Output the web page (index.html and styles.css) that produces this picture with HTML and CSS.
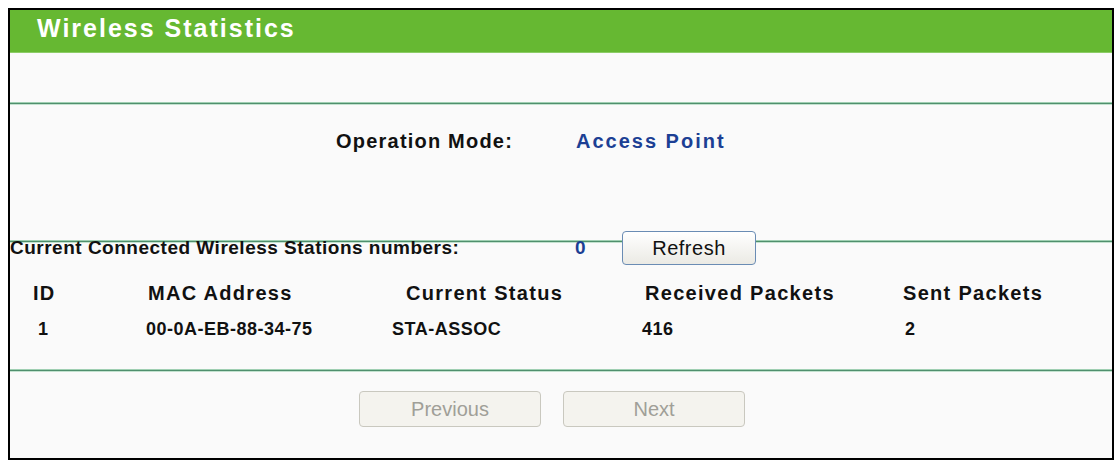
FILE: index.html
```html
<!DOCTYPE html>
<html lang="en">
<head>
    <meta charset="UTF-8">
    <title>Wireless Statistics</title>
    <link rel="stylesheet" href="styles.css">
</head>
<body>
    <div class="panel">
        <div class="title">Wireless Statistics</div>
        <div class="blank"></div>
        <div class="rule"></div>

        <div class="mode">
            <div class="mode-label">Operation Mode:</div>
            <div class="mode-value">Access Point</div>
        </div>
        <div class="rule"></div>

        <div class="stations">
            <div class="count-row">
                <span class="count-label">Current Connected Wireless Stations numbers:</span>
                <span class="count-value">0</span>
                <button class="btn refresh">Refresh</button>
            </div>
            <div class="grid head">
                <span>ID</span>
                <span>MAC Address</span>
                <span>Current Status</span>
                <span>Received Packets</span>
                <span>Sent Packets</span>
            </div>
            <div class="grid data">
                <span>1</span>
                <span>00-0A-EB-88-34-75</span>
                <span>STA-ASSOC</span>
                <span>416</span>
                <span>2</span>
            </div>
        </div>
        <div class="rule"></div>

        <div class="pager">
            <button class="btn pg" disabled>Previous</button>
            <button class="btn pg" disabled>Next</button>
        </div>
    </div>
</body>
</html>
```

FILE: styles.css
```css
* {
    box-sizing: border-box;
}

body {
    margin: 8px 4px 8px 8px;
    background: #ffffff;
    font-family: "Liberation Sans", Arial, sans-serif;
}

.panel {
    border: 2px solid #000;
    background: #fafafa;
}

.title {
    height: 43px;
    padding: 4px 0 0 27px;
    background: #66b832;
    color: #fff;
    font-size: 25px;
    font-weight: bold;
    letter-spacing: 2px;
    border-bottom: 1px solid #8ccc66;
}

.blank {
    height: 49px;
}

.rule {
    height: 3px;
    background: #4f8f6d;
    border-top: 1px solid #9fcfb2;
    border-bottom: 1px solid #c3e2cf;
}

.mode {
    display: grid;
    grid-template-columns: 1fr 1fr;
    height: 135px;
    padding-top: 25px;
    font-size: 20px;
    font-weight: bold;
}

.mode-label {
    text-align: right;
    padding-right: 48px;
    letter-spacing: 1.2px;
    color: #111;
}

.mode-value {
    padding-left: 15px;
    letter-spacing: 2px;
    color: #1c3f94;
}

.stations {
    display: flex;
    flex-direction: column;
    height: 126px;
    font-weight: bold;
    color: #111;
}

.count-row {
    display: flex;
    align-items: center;
    height: 34px;
    margin-top: -12px;
    font-size: 19px;
    letter-spacing: 0.5px;
}

.count-label {
    width: 565px;
}

.count-value {
    width: 47px;
    color: #1c3f94;
}

.btn {
    font-family: "Liberation Sans", Arial, sans-serif;
    font-size: 20px;
    border-radius: 4px;
}

.refresh {
    position: relative;
    width: 134px;
    height: 34px;
    border: 1px solid #6a8cb4;
    background: linear-gradient(#ffffff, #ebeae4);
    color: #111;
    letter-spacing: 0.5px;
}

.grid {
    display: grid;
    height: 35px;
    align-items: center;
}

.head {
    grid-template-columns: 115px 258px 239px 258px 1fr;
    margin-top: 11px;
    padding-left: 23px;
    font-size: 20px;
    letter-spacing: 1.3px;
}

.data {
    grid-template-columns: 108px 246px 250px 263px 1fr;
    margin-top: 1px;
    padding-left: 28px;
    font-size: 18px;
    letter-spacing: 0.5px;
}

.pager {
    display: flex;
    justify-content: center;
    gap: 22px;
    height: 86px;
    padding: 19px 18px 0 0;
}

.pg {
    width: 182px;
    height: 36px;
    border: 1px solid #c9c8bf;
    background: #f4f3ee;
    color: #a09f98;
}
```
